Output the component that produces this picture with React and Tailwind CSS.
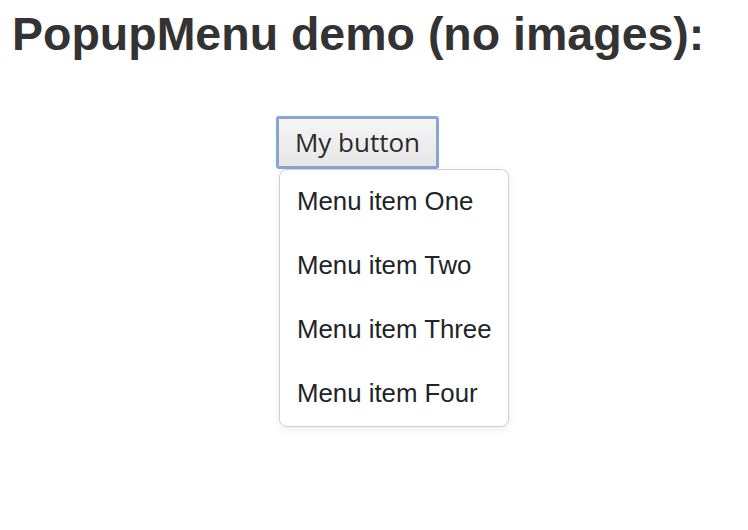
export default function App() {
  const items = ["Menu item One", "Menu item Two", "Menu item Three", "Menu item Four"];
  return (
    <div className="w-[748px] h-[530px] bg-white font-['Liberation_Sans',Arial,sans-serif]">
      <h1 className="pl-[12px] pt-[8px] text-[46.5px] leading-[52px] font-bold text-[#333333]">
        PopupMenu demo (no images):
      </h1>
      <div className="mt-[56px] ml-[276px] relative">
        <button className="h-[53px] w-[163px] rounded-[3px] border-2 border-[#7ea6f2] bg-gradient-to-b from-[#f5f5f5] to-[#e6e6e6] text-[26px] text-[#2a2a2a] font-['Open_Sans',sans-serif] shadow-[inset_0_0_0_1px_#a0a0a0]">
          My button
        </button>
        <div className="absolute left-[3px] top-[53px] w-[230px] rounded-[8px] border border-[#cfcfcf] bg-white shadow-[0_2px_8px_rgba(0,0,0,0.08)]">
          {items.map((t) => (
            <div key={t} className="h-[64px] flex items-center pl-[17px] pb-[2px] text-[25.8px] text-[#212529]">
              {t}
            </div>
          ))}
        </div>
      </div>
    </div>
  );
}
